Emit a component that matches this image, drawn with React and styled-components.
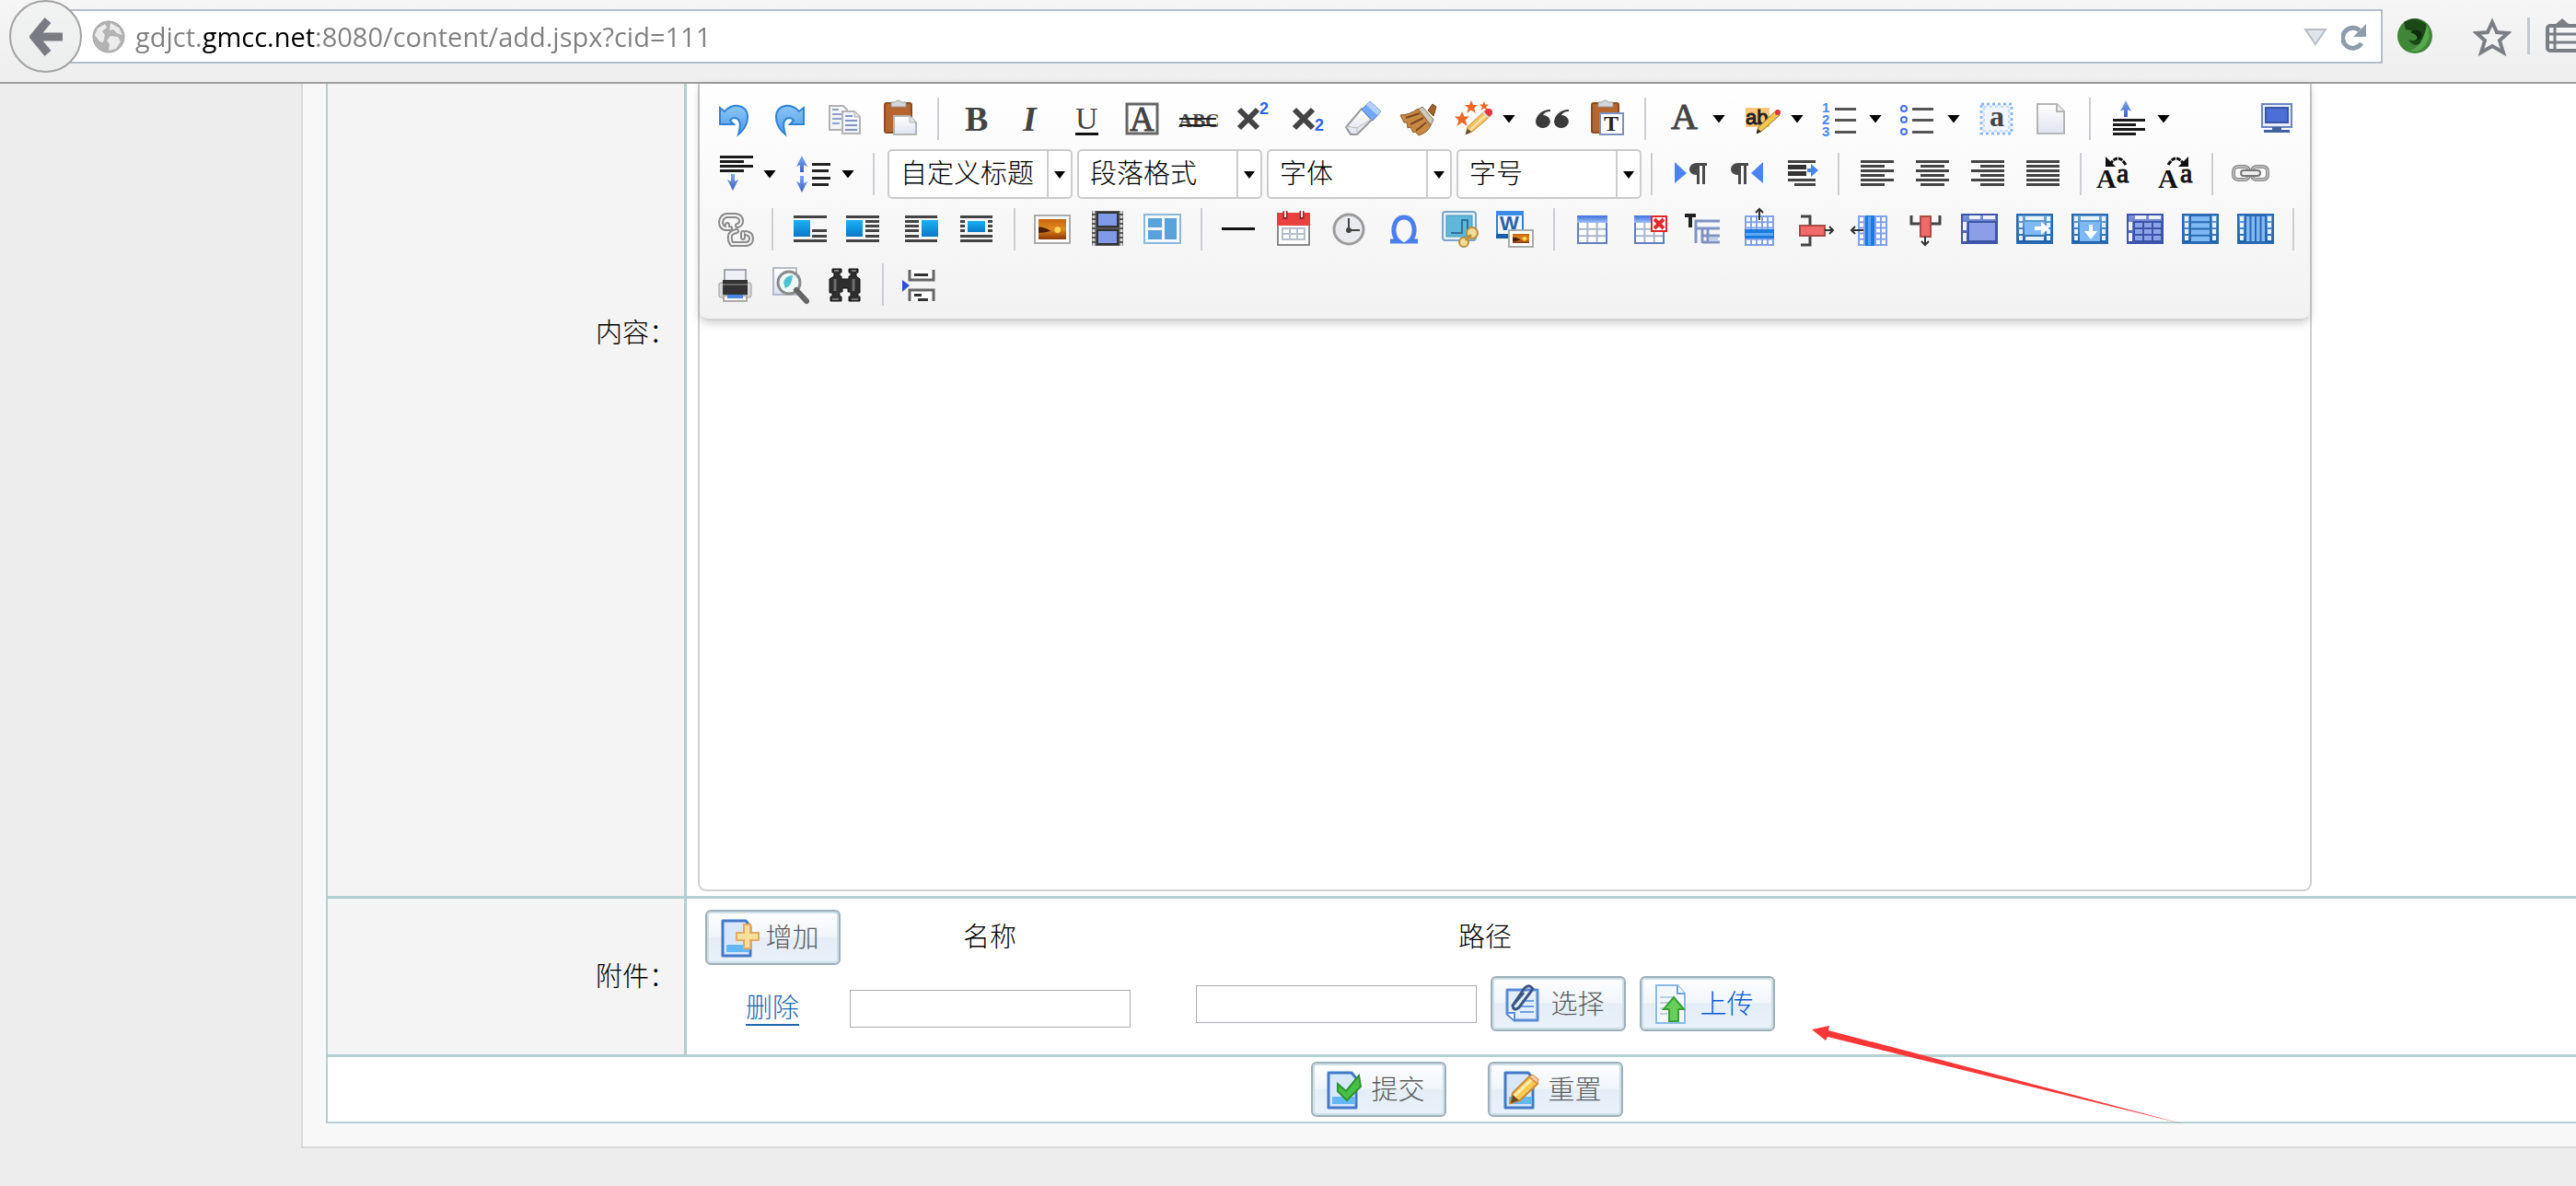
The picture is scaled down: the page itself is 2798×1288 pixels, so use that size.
import React from "react";
import styled, { createGlobalStyle } from "styled-components";

const cjk = `"Liberation Sans", "Noto Sans CJK SC", sans-serif`;
const teal = "#b3cfd0";

const GlobalStyle = createGlobalStyle`
  *, *::before, *::after { box-sizing: border-box; }
  body {
    margin: 0;
    overflow: hidden;
    background: #ededed;
    color: #000;
    font: 300 29px/36px ${cjk};
  }
  button, input, select, textarea { font: inherit; color: inherit; }
`;

/* ---------- browser bar ---------- */

const NavBar = styled.header`
  display: flex;
  align-items: flex-start;
  height: 91px;
  overflow: hidden;
  border-bottom: 2px solid #a09fa0;
  background: linear-gradient(#f6f6f6, #eeeeee);
`;

const BackButton = styled.button`
  flex: none;
  z-index: 1;
  display: grid;
  place-items: center;
  width: 79px;
  height: 79px;
  margin-left: 10px;
  padding: 0;
  border: 2px solid #a3a3a3;
  border-radius: 50%;
  background: linear-gradient(#f2f3f3, #eceeee);
`;

const AddressField = styled.div`
  flex: 1;
  min-width: 0;
  display: flex;
  align-items: center;
  height: 59px;
  margin: 10px 0 0 -14px;
  padding: 0 8px 0 23px;
  border: 2px solid #b3bec9;
  background: #fff;
`;

const AddressInput = styled.input`
  flex: 1;
  min-width: 0;
  height: 55px;
  margin-left: 11px;
  padding: 0;
  border: 0;
  outline: 0;
  font: 400 29px/55px "Open Sans", "Noto Sans", sans-serif;
  color: #808080;
  background: linear-gradient(90deg, #808080 73px, #000 73px 196px, #808080 196px);
  -webkit-background-clip: text;
  background-clip: text;
  -webkit-text-fill-color: transparent;
`;

const BarButton = styled.button`
  flex: none;
  display: grid;
  place-items: center;
  width: 42px;
  height: 40px;
  padding: 0;
  border: 0;
  background: none;
`;

const BarTools = styled.div`
  flex: none;
  display: flex;
  align-items: center;
  gap: 17px;
  width: 210px;
  padding: 19px 0 0 14px;

  > :first-child { margin-right: 25px; }
`;

const BarDivider = styled.span`
  flex: none;
  width: 3px;
  height: 40px;
  background: #c3c9d0;
`;

/* ---------- form frame ---------- */

const Panel = styled.main`
  margin: 0 -34px 0 327px;
  padding: 0 0 25px 25px;
  border: solid #d9d9d9;
  border-width: 0 0 2px 2px;
  background: #f8f8f8;
`;

const Form = styled.form`
  border: solid ${teal};
  border-width: 0 0 2px 2px;
  background: #fff;
`;

const FormRow = styled.div`
  display: grid;
  grid-template-columns: 390px 1fr;
  border-bottom: 3px solid ${teal};
`;

const LabelCell = styled.div`
  display: flex;
  justify-content: flex-end;
  align-items: ${(p) => (p.$top ? "flex-start" : "center")};
  padding: ${(p) => (p.$top ? "253px 9px 0 0" : "0 9px 0 0")};
  border-right: 3px solid ${teal};
  background: #f4f4f4;
`;

const FieldCell = styled.div`
  padding: ${(p) => p.$pad};
`;

const SubmitRow = styled.div`
  display: flex;
  justify-content: center;
  gap: 45px;
  padding: 5px 7px 5px 5px;
`;

/* ---------- editor ---------- */

const Editor = styled.section`
  display: flex;
  flex-direction: column;
  max-width: 1753px;
  border: solid #d0d0d0;
  border-width: 0 2px 2px;
  border-radius: 0 0 9px 9px;
`;

const Toolbar = styled.div`
  padding: 8px 6px 7px 8px;
  border-bottom: 2px solid #d2d2d2;
  border-radius: 0 0 9px 9px;
  background: linear-gradient(#ffffff, #f2f2f2);
  box-shadow: 0 3px 10px rgba(0, 0, 0, 0.2);
`;

const ToolRow = styled.div`
  display: flex;
  align-items: center;
  height: 60px;
`;

const ToolButton = styled.button`
  flex: none;
  display: flex;
  align-items: center;
  width: ${(p) => (p.$menu ? 85 : 60)}px;
  height: 60px;
  margin-left: ${(p) => (p.$end ? "auto" : "0")};
  padding: 0 0 0 10px;
  border: 0;
  background: none;
`;

const Glyph = styled.svg`
  flex: none;
  display: block;
  width: 40px;
  height: 40px;
  overflow: visible;
`;

const Caret = styled.span`
  width: 14px;
  height: 9px;
  margin-left: 11px;
  background: #000;
  clip-path: polygon(0 0, 100% 0, 50% 100%);
`;

const Separator = styled.span`
  flex: none;
  width: 2px;
  height: 46px;
  margin: 0 11px 0 10px;
  background: #cfcdd3;
`;

const Combos = styled.div`
  display: flex;
  gap: 5px;
  padding-left: 3px;
`;

const Combo = styled.label`
  display: flex;
  align-items: center;
  width: 201px;
  height: 54px;
  border: 2px solid #cccccc;
  border-radius: 5px;
  background: #fff;
`;

const ComboSelect = styled.select`
  flex: 1;
  min-width: 0;
  height: 50px;
  padding: 0 0 0 12px;
  border: 0;
  outline: 0;
  appearance: none;
  background: none;
`;

const ComboArrow = styled.span`
  flex: none;
  display: grid;
  place-items: center;
  width: 26px;
  height: 50px;
  border-left: 2px solid #cccccc;
  ${Caret} { margin: 2px 0 0; width: 12px; height: 8px; }
`;

const EditArea = styled.textarea`
  display: block;
  width: 100%;
  height: 618px;
  padding: 16px;
  border: 0;
  outline: 0;
  resize: none;
  background: transparent;
`;

/* ---------- attachments ---------- */

const Attachments = styled.table`
  border-collapse: collapse;
  table-layout: fixed;
  width: 1240px;
  td, th { height: 72px; padding: 0; font-weight: 300; text-align: center; }
`;

const LowCell = styled.td`
  && { padding-top: 10px; }
`;

const PathGroup = styled.div`
  display: flex;
  justify-content: center;
  align-items: center;
  gap: 15px;
`;

const TextInput = styled.input`
  width: 305px;
  height: 41px;
  padding: 0 8px;
  border: 1px solid #abadb3;
  outline: 0;
  background: #fff;
  vertical-align: middle;
`;

const DeleteLink = styled.a`
  display: inline-block;
  line-height: 34px;
  color: #1f66ad;
  text-decoration: none;
  border-bottom: 2px solid #1f66ad;
`;

const PushButton = styled.button`
  display: inline-flex;
  align-items: center;
  gap: 8px;
  height: 60px;
  width: 147px;
  padding: 2px 0 0 12px;
  border: 2px solid #9fb0ba;
  border-radius: 6px;
  background: linear-gradient(#fdfeff, #f1f6fb 48%, #e5eef6 50%, #e9f1fb);
  box-shadow: inset 0 0 0 2px #cfdfe6;
  color: ${(p) => (p.$accent ? "#0a5ad8" : "#5c5c5c")};
  vertical-align: middle;
  white-space: nowrap;
`;

const ButtonIcon = styled.svg`
  flex: none;
  width: 44px;
  height: 44px;
  overflow: visible;
`;

const Pointer = styled.svg`
  position: absolute;
  left: 1968px;
  top: 1113px;
  width: 406px;
  height: 110px;
  pointer-events: none;
`;

/* ---------- icon drawings, each on a 40 x 40 field ---------- */

const serif = "Liberation Serif, serif";
const sans = "Liberation Sans, sans-serif";

const Bars = ({ rows, c = "#444", h = 3 }) =>
  rows.map(([x1, x2, y], i) => (
    <rect key={i} x={x1} y={y - 1} width={x2 - x1} height={h} fill={c} />
  ));

const Letter = ({ x, y, s, children, f = serif, ...rest }) => (
  <text x={x} y={y} fontSize={s} fontFamily={f} fontWeight="700" fill="#444" {...rest}>
    {children}
  </text>
);

const ArrowV = ({ x, y, up }) => (
  <path
    d={up
      ? `M${x} ${y}l6 12l-4-2v8h-4v-8l-4 2z`
      : `M${x} ${y + 18}l6-12l-4 2v-8h-4v8l-4-2z`}
    fill="url(#arrowBlue)"
  />
);

const Board = () => (
  <>
    <rect x="3" y="3" width="29" height="32" rx="2" fill="#b5662e" stroke="#8b4a1e" strokeWidth="2" />
    <path d="M10 2h4q3-4 7 0h5v5H10z" fill="#d5d8da" stroke="#999" />
  </>
);

const Pencil = () => (
  <>
    <path d="M11 37l2-8L32 11l6 6L18 34z" fill="#f7c35f" stroke="#b5823a" />
    <path d="M16 32L35 14" stroke="#fde6ab" strokeWidth="2" />
    <path d="M11 37l2-6l4 3z" fill="#5b4630" />
    <circle cx="36" cy="13" r="4" fill="#e8323e" />
    <path d="M30 13l6 6" stroke="#d9d9d9" strokeWidth="2" />
  </>
);

const Star = ({ x, y, r }) => (
  <path
    transform={`translate(${x} ${y}) scale(${r})`}
    d="M0-1L.3-.3L1-.3L.45.2L.7 1L0 .5L-.7 1L-.45.2L-1-.3L-.3-.3z"
    fill="#ee6526"
  />
);

const Pilcrow = ({ x }) => (
  <path transform={`translate(${x} 8)`} d="M19 0v3h-2v20h-3V3h-3v20H8V13C-3 13-2 0 8 0z" fill="#4a4a4a" />
);

const Grid = ({ x, y, w, h, cols, rows, c = "#7f96c9", fill = "#fff", sw = 2 }) => (
  <>
    <rect x={x} y={y} width={w} height={h} fill={fill} stroke={c} strokeWidth={sw} />
    <path
      d={[
        ...Array.from({ length: cols - 1 }, (_, i) => `M${x + (w * (i + 1)) / cols} ${y}v${h}`),
        ...Array.from({ length: rows - 1 }, (_, i) => `M${x} ${y + (h * (i + 1)) / rows}h${w}`),
      ].join("")}
      stroke={c}
      strokeWidth={sw}
    />
  </>
);

const SmallTable = ({ x }) => (
  <>
    <Grid x={x} y={12} w={31} h={23} cols={3} rows={3} c="#a9b6cd" />
    <rect x={x} y="6" width="31" height="29" fill="none" stroke="#5f7fc0" strokeWidth="2" />
    <rect x={x - 1} y="5" width="33" height="8" fill="url(#headBlue)" />
  </>
);

const Photo = ({ x, y, w, h }) => (
  <>
    <rect x={x} y={y} width={w} height={h} fill="#fff" stroke="#aaa" strokeWidth="2" />
    <rect x={x + 4} y={y + 4} width={w - 8} height={h - 8} fill="url(#sunset)" />
    <circle cx={x + w * 0.65} cy={y + h * 0.52} r={w * 0.09} fill="#ffd257" />
    <path d={`M${x + 4} ${y + h * 0.42}q${w * 0.2} 0 ${w * 0.35} ${h * 0.15}q-${w * 0.2} 2-${w * 0.35} 2z`} fill="#4d1f08" />
  </>
);

const BlueFrame = ({ deep, children }) => (
  <>
    <rect x="1" y="4" width="38" height="31" fill={deep ? "url(#cellIndigo)" : "url(#cellBlue)"} stroke={deep ? "#3d55a8" : "#2a69b0"} strokeWidth="2" />
    {children}
  </>
);

const SideHoles = () =>
  [3, 33].map((x) => [6, 13, 20, 27].map((y) => <rect key={x + "-" + y} x={x} y={y} width="4" height="5" fill="#e8f3ff" />));

const IndigoHoles = () => (
  <path d="M9 5h12v4H9zM24 5h13v4H24zM2 12h4v9H2zM2 24h4v9H2z" fill="#eef1ff" />
);

const icons = {
  undo: <path d="M4 8l5 4C16 3 34 3 34 18C34 27 28 34 24 37C26 30 28 20 20 19C17 19 16 20 15 22L19 26H4z" fill="url(#undoBlue)" stroke="#2f83d8" strokeWidth="2" />,
  redo: <path d="M35 8l-5 4C23 3 5 3 5 18C5 27 11 34 15 37C13 30 11 20 19 19C22 19 23 20 24 22L20 26H35z" fill="url(#undoBlue)" stroke="#2f83d8" strokeWidth="2" />,
  copy: (
    <>
      <path d="M3 6h15l4 4v22H3z" fill="#f4f5f9" stroke="#b3b3b3" strokeWidth="2" />
      <Bars rows={[[6, 13, 10], [6, 16, 15], [6, 16, 20], [6, 14, 25]]} c="#8fa0cb" h={2} />
      <path d="M17 12h13l6 6v18H17z" fill="#f4f5f9" stroke="#b3b3b3" strokeWidth="2" />
      <path d="M30 12v6h6" fill="#ddd" stroke="#b3b3b3" />
      <Bars rows={[[20, 28, 17], [20, 33, 22], [20, 33, 27], [20, 33, 32]]} c="#7f93c4" h={2} />
    </>
  ),
  paste: (
    <>
      <Board />
      <path d="M13 17h17l7 7v13H13z" fill="url(#paper)" stroke="#b5b5b5" strokeWidth="2" />
      <path d="M30 17v7h7" fill="#e4e4e4" stroke="#b5b5b5" />
    </>
  ),
  bold: <Letter x={7} y={33} s={38}>B</Letter>,
  italic: <Letter x={10} y={33} s={38} fontStyle="italic">I</Letter>,
  underline: (
    <>
      <Letter x={7} y={31} s={34} fontWeight="400">U</Letter>
      <Bars rows={[[7, 32, 36]]} c="#111" />
    </>
  ),
  border: (
    <>
      <rect x="3" y="4" width="33" height="32" fill="#fff" stroke="#666" strokeWidth="3" />
      <Letter x={6} y={33} s={37} fontWeight="400" stroke="#444">A</Letter>
    </>
  ),
  strike: (
    <>
      <Letter x={-1} y={29} s={21} fill="#444">ABC</Letter>
      <Bars rows={[[0, 40, 20], [0, 40, 27]]} c="#222" h={2} />
    </>
  ),
  sup: (
    <>
      <path d="M5 10L25 30M25 10L5 30" stroke="#444" strokeWidth="6" />
      <Letter x={27} y={15} s={18} f={sans} fill="#2f62e8">2</Letter>
    </>
  ),
  sub: (
    <>
      <path d="M5 10L25 30M25 10L5 30" stroke="#444" strokeWidth="6" />
      <Letter x={27} y={33} s={18} f={sans} fill="#2f62e8">2</Letter>
    </>
  ),
  eraser: (
    <>
      <path d="M18 9L29 21L13 37H6L1 29z" fill="url(#paper)" stroke="#999" strokeWidth="2" />
      <path d="M27 1L39 12L30 22L18 10z" fill="#72a8f5" stroke="#4b7fd0" />
      <path d="M27 1L39 12L35 16L23 5z" fill="#b4d1fb" />
      <path d="M13 37V30L1 28M13 30L29 20" fill="none" stroke="#bbb" />
    </>
  ),
  brush: (
    <>
      <path d="M35 4l4 3l-3 10l-6-6z" fill="#a5622c" stroke="#70421f" />
      <path d="M19 10l5-3l12 14l-3 6z" fill="#cfc9b8" stroke="#7b6e55" />
      <path d="M0 16q10 0 19-7l14 18q-3 8-13 11l-4-4l-2 1l-3-6l-3 1l-1-6l-3 0z" fill="#c78a45" stroke="#8b5827" />
      <path d="M6 19l15-5M11 26l14-7M17 33l11-9" stroke="#7d4a1c" strokeWidth="2" />
    </>
  ),
  wand: (
    <>
      <Star x={17} y={7} r={7} />
      <Star x={31} y={6} r={5} />
      <Star x={7} y={20} r={8} />
      <Pencil />
    </>
  ),
  quote: (
    <>
      {[0, 20].map((x) => (
        <path key={x} transform={`translate(${x} 0)`} d="M18 10C8 10 2 17 2 24A8 7 0 1 0 10 16Q12 12 18 12z" fill="#3a3a3a" />
      ))}
    </>
  ),
  pasteText: (
    <>
      <Board />
      <rect x="12" y="14" width="25" height="23" fill="#fff" stroke="#7d90bd" strokeWidth="2" />
      <Letter x={16} y={33} s={24} fill="#222">T</Letter>
    </>
  ),
  color: <Letter x={6} y={31} s={40} fontWeight="400" stroke="#444">A</Letter>,
  highlight: (
    <>
      <rect x="2" y="8" width="26" height="21" fill="#fdc676" />
      <Letter x={2} y={26} s={22} f={sans} fill="#222" fontWeight="400" stroke="#222">ab</Letter>
      <path d="M14 36l2-7L34 12l5 4L20 33z" fill="#f3c74f" stroke="#8f6f2d" />
      <path d="M14 36l1-5l4 3z" fill="#222" />
      <circle cx="37" cy="13" r="3" fill="#e8323e" />
    </>
  ),
  ordered: (
    <>
      {[1, 2, 3].map((n) => (
        <Letter key={n} x={0} y={n * 13} s={15} f={sans} fill="#4d85f2">{n}</Letter>
      ))}
      <Bars rows={[[14, 37, 9], [14, 37, 21], [14, 37, 34]]} c="#555" />
    </>
  ),
  bullets: (
    <>
      {[9, 21, 34].map((y) => (
        <circle key={y} cx="4" cy={y} r="3" fill="#fff" stroke="#4470f0" strokeWidth="2" />
      ))}
      <Bars rows={[[13, 36, 9], [13, 36, 21], [13, 36, 34]]} c="#555" />
    </>
  ),
  selectAll: (
    <>
      <rect x="3" y="4" width="33" height="32" fill="#f0f6ff" stroke="#8fb8f5" strokeWidth="3" strokeDasharray="3 3" />
      <rect x="6" y="7" width="27" height="26" fill="none" stroke="#c3dafb" strokeWidth="2" strokeDasharray="3 3" />
      <Letter x={12} y={28} s={32}>a</Letter>
    </>
  ),
  page: (
    <>
      <path d="M4 4h21l8 8v24H4z" fill="url(#paper)" stroke="#b5b5b5" strokeWidth="2" />
      <path d="M25 4v8h8" fill="#eee" stroke="#b5b5b5" strokeWidth="2" />
    </>
  ),
  spaceAbove: (
    <>
      <ArrowV x={17} y={0} up />
      <Bars rows={[[3, 38, 21], [3, 28, 26], [3, 38, 31], [3, 28, 36]]} c="#1a1a1a" />
    </>
  ),
  fullscreen: (
    <>
      <rect x="4" y="4" width="32" height="25" fill="#e9eefa" stroke="#6b86bf" strokeWidth="2" />
      <rect x="8" y="8" width="24" height="16" fill="#4a70d8" stroke="#3a55a5" strokeWidth="2" />
      <path d="M15 29h10v3h9v3H6v-3h9z" fill="#41619f" />
    </>
  ),
  spaceBelow: (
    <>
      <Bars rows={[[4, 40, 1], [4, 30, 6], [4, 40, 11], [4, 30, 16]]} c="#1a1a1a" />
      <ArrowV x={18} y={20} />
    </>
  ),
  lineHeight: (
    <>
      <ArrowV x={8} y={0} up />
      <ArrowV x={8} y={22} />
      <Bars rows={[[19, 39, 9], [19, 37, 16], [19, 39, 24], [19, 37, 31]]} c="#222" />
    </>
  ),
  ltr: (
    <>
      <path d="M3 7v23l13-11z" fill="#4c83f3" />
      <Pilcrow x={19} />
    </>
  ),
  rtl: (
    <>
      <Pilcrow x={4} />
      <path d="M39 7v23L26 19z" fill="#4c83f3" />
    </>
  ),
  indent: (
    <>
      <Bars rows={[[6, 36, 6], [13, 36, 31], [6, 36, 26]]} />
      <Bars rows={[[6, 26, 11], [6, 26, 18]]} c="#333" h={5} />
      <path d="M27 14h4V9l8 7l-8 7v-5h-4z" fill="#4c83f3" />
    </>
  ),
  alignLeft: <Bars rows={[[2, 38, 6], [2, 28, 11], [2, 38, 16], [2, 28, 21], [2, 38, 26], [2, 28, 31]]} />,
  alignCenter: <Bars rows={[[2, 38, 6], [7, 33, 11], [2, 38, 16], [7, 33, 21], [2, 38, 26], [7, 33, 31]]} />,
  alignRight: <Bars rows={[[2, 38, 6], [12, 38, 11], [2, 38, 16], [12, 38, 21], [2, 38, 26], [12, 38, 31]]} />,
  alignJustify: <Bars rows={[[2, 38, 6], [2, 38, 11], [2, 38, 16], [2, 38, 21], [2, 38, 26], [2, 38, 31]]} />,
  upper: (
    <>
      <Letter x={-5} y={35} s={30} fill="#111">A</Letter>
      <Letter x={17} y={29} s={30} fill="#111" fontWeight="400" stroke="#111">a</Letter>
      <path d="M27 10q-8-13-16-2" fill="none" stroke="#111" strokeWidth="3" strokeDasharray="5 1" />
      <path d="M5 1v11h11z" fill="#111" />
    </>
  ),
  lower: (
    <>
      <Letter x={2} y={35} s={30} fill="#111">A</Letter>
      <Letter x={26} y={29} s={30} fill="#111" fontWeight="400" stroke="#111">a</Letter>
      <path d="M13 10q8-13 16-2" fill="none" stroke="#111" strokeWidth="3" strokeDasharray="5 1" />
      <path d="M35 1v11H24z" fill="#111" />
    </>
  ),
  link: (
    <>
      <rect x="1" y="12" width="17" height="14" rx="5" fill="none" stroke="#8a8a8a" strokeWidth="4" />
      <rect x="21" y="12" width="17" height="14" rx="5" fill="none" stroke="#8a8a8a" strokeWidth="4" />
      <rect x="1" y="12" width="17" height="14" rx="5" fill="none" stroke="#e4e4e4" />
      <rect x="21" y="12" width="17" height="14" rx="5" fill="none" stroke="#e4e4e4" />
      <rect x="9" y="16" width="21" height="6" rx="3" fill="#eee" stroke="#777" strokeWidth="2" />
    </>
  ),
  unlink: (
    <>
      {["#8b8b8b", "#f4f4f4"].map((c, i) => (
        <path
          key={c}
          d="M15 19H10q-5-1-5-7q1-6 6-7h10q6 1 6 6q0 4-4 5M22 22q-6 1-7 5q-1 5 2 9h16q5-1 5-6q0-5-6-6M12 19v-4M29 24v5"
          fill="none"
          stroke={c}
          strokeWidth={i ? 2 : 6}
          strokeLinecap="round"
        />
      ))}
    </>
  ),
  imgNone: (
    <>
      <Bars rows={[[1, 37, 6], [21, 37, 21], [21, 37, 27], [1, 37, 32]]} />
      <rect x="1" y="10" width="18" height="18" fill="url(#azure)" />
    </>
  ),
  imgLeft: (
    <>
      <Bars rows={[[-2, 34, 6], [19, 34, 11], [19, 34, 16], [19, 34, 21], [19, 34, 27], [-2, 34, 32]]} />
      <rect x="-2" y="10" width="18" height="18" fill="url(#azure)" />
    </>
  ),
  imgRight: (
    <>
      <Bars rows={[[2, 37, 6], [2, 17, 11], [2, 17, 16], [2, 17, 21], [2, 17, 27], [2, 37, 32]]} />
      <rect x="20" y="10" width="18" height="18" fill="url(#azure)" />
    </>
  ),
  imgCenter: (
    <>
      <Bars rows={[[2, 37, 6], [2, 7, 11], [32, 37, 11], [2, 7, 16], [32, 37, 16], [2, 7, 21], [32, 37, 21], [2, 37, 27], [2, 37, 32]]} />
      <rect x="10" y="11" width="19" height="12" fill="url(#azure)" />
    </>
  ),
  image: <Photo x={0} y={5} w={38} h={30} />,
  film: (
    <>
      <rect x="2" y="0" width="34" height="38" fill="#555" />
      <path d="M4 0v38M34 0v38" stroke="#d8d8d8" strokeWidth="3" strokeDasharray="3 2" />
      <rect x="8" y="2" width="22" height="15" fill="#7f9be8" stroke="#333" strokeWidth="2" />
      <rect x="8" y="21" width="22" height="15" fill="#7f9be8" stroke="#333" strokeWidth="2" />
    </>
  ),
  template: (
    <>
      <rect x="-1" y="4" width="39" height="31" fill="#f3f9ff" stroke="#8bb8da" strokeWidth="2" />
      <path d="M3 8h15v10H3zM3 21h15v10H3zM21 8h13v23H21z" fill="#5aa2da" />
    </>
  ),
  rule: <Bars rows={[[0, 36, 19]]} c="#111" />,
  date: (
    <>
      <rect x="1" y="3" width="34" height="34" fill="#fff" stroke="#8a8a8a" strokeWidth="2" />
      <rect x="0" y="2" width="36" height="14" fill="#e8413e" />
      <path d="M9 0v9M27 0v9" stroke="#9b2222" strokeWidth="5" />
      <path d="M9 0v7M27 0v7" stroke="#eee" strokeWidth="2" />
      <Grid x={6} y={19} w={24} h={12} cols={3} rows={2} c="#b5bfcc" />
    </>
  ),
  clock: (
    <>
      <circle cx="18" cy="20" r="16" fill="#e9eaee" stroke="#9c9c9c" strokeWidth="3" />
      <path d="M18 8v13h12" fill="none" stroke="#444" strokeWidth="2" />
      <circle cx="18" cy="21" r="3" fill="#444" />
    </>
  ),
  omega: <path d="M3 33h9C4 27 5 7 18 7s14 20 6 26h9" fill="none" stroke="#4a7fee" strokeWidth="5" />,
  map: (
    <>
      <rect x="0" y="1" width="36" height="31" rx="3" fill="#e7f3fa" stroke="#7ba4c8" strokeWidth="2" />
      <rect x="4" y="5" width="28" height="23" fill="#5fb8d9" stroke="#4a94bb" />
      <path d="M9 24h12V10h6v16" fill="none" stroke="#2f7398" strokeWidth="2" />
      <circle cx="32" cy="24" r="6" fill="#f6dc94" stroke="#b78e3b" strokeWidth="2" />
      <circle cx="23" cy="34" r="5" fill="#f6dc94" stroke="#b78e3b" strokeWidth="2" />
      <path d="M25 32l6-6" stroke="#b78e3b" strokeWidth="3" />
    </>
  ),
  word: (
    <>
      <rect x="-1" y="1" width="28" height="28" fill="#f3f8ff" stroke="#2f7fd6" strokeWidth="2" />
      <rect x="-2" y="0" width="30" height="5" fill="#3d8be8" />
      <rect x="-2" y="25" width="14" height="5" fill="#1b5cab" />
      <Letter x={2} y={21} s={22} f={sans} fill="#2a62a8">W</Letter>
      <Photo x={12} y={21} w={26} h={18} />
    </>
  ),
  table: <SmallTable x={4} />,
  tableDelete: (
    <>
      <SmallTable x={6} />
      <rect x="24" y="6" width="16" height="16" fill="#fff" stroke="#e0282c" strokeWidth="2" />
      <path d="M27 9l10 10M37 9L27 19" stroke="#e0282c" strokeWidth="4" />
    </>
  ),
  tableTitle: (
    <>
      <path d="M0 3h12v4H8v11H4V7H0z" fill="#222" />
      <path d="M12 35V11h26M19 35V19h19M12 19h26M25 19v16M19 27h19M19 34h19" fill="none" stroke="#7f93c4" strokeWidth="3" />
      <path d="M27 29h9v4h-9z" fill="#c4cfee" />
    </>
  ),
  rowInsert: (
    <>
      <Grid x={6} y={6} w={30} h={31} cols={5} rows={5} c="#7fa2ea" />
      <rect x="5" y="20" width="32" height="10" fill="#1b7be0" />
      <rect x="6" y="24" width="30" height="3" fill="#5ea8f2" />
      <path d="M21 10V-1M17 2l4-4l4 4" fill="none" stroke="#333" strokeWidth="2" />
    </>
  ),
  rowDelete: (
    <>
      <path d="M6 6h10v9M6 37h10v-9" fill="none" stroke="#444" strokeWidth="3" />
      <rect x="5" y="16" width="27" height="11" fill="#f06a6a" stroke="#a84a45" strokeWidth="2" />
      <path d="M32 21h9M37 17l4 4l-4 4" fill="none" stroke="#333" strokeWidth="2" />
    </>
  ),
  colInsert: (
    <>
      <Grid x={9} y={6} w={30} h={31} cols={5} rows={5} c="#7fa2ea" />
      <rect x="16" y="5" width="10" height="33" fill="#1b7be0" />
      <rect x="19" y="6" width="3" height="31" fill="#5e9ff2" />
      <path d="M14 21H2M5 17l-4 4l4 4" fill="none" stroke="#333" strokeWidth="2" />
    </>
  ),
  colDelete: (
    <>
      <path d="M6 5v9h9M37 5v9h-9" fill="none" stroke="#444" strokeWidth="3" />
      <rect x="16" y="6" width="11" height="22" fill="#f06a6a" stroke="#a84a45" strokeWidth="2" />
      <path d="M21 28v9M17 33l4 4l4-4" fill="none" stroke="#333" strokeWidth="2" />
    </>
  ),
  mergeCells: (
    <BlueFrame deep>
      <IndigoHoles />
      <rect x="8" y="12" width="30" height="21" fill="#8c9fe6" stroke="#3d55a8" strokeWidth="2" />
    </BlueFrame>
  ),
  mergeRight: (
    <BlueFrame>
      <SideHoles />
      <rect x="10" y="6" width="20" height="4" fill="#e8f3ff" />
      <rect x="10" y="28" width="20" height="4" fill="#e8f3ff" />
      <rect x="9" y="12" width="22" height="14" fill="#7fb9f5" />
      <path d="M20 17h7v-5l9 7l-9 7v-5h-7z" fill="#fff" />
    </BlueFrame>
  ),
  mergeDown: (
    <BlueFrame>
      <SideHoles />
      <rect x="10" y="6" width="20" height="4" fill="#e8f3ff" />
      <rect x="9" y="12" width="22" height="21" fill="#7fb9f5" />
      <path d="M19 15v7h-5l7 9l7-9h-5v-7z" fill="#fff" />
    </BlueFrame>
  ),
  splitCells: (
    <BlueFrame deep>
      <IndigoHoles />
      <Grid x={8} y={12} w={30} h={21} cols={3} rows={3} c="#3d55a8" fill="#8ba3e8" />
    </BlueFrame>
  ),
  splitRows: (
    <BlueFrame>
      <SideHoles />
      <Grid x={9} y={5} w={22} h={29} cols={1} rows={4} c="#2a69b0" fill="#7fb9f5" />
    </BlueFrame>
  ),
  splitCols: (
    <BlueFrame>
      <SideHoles />
      <Grid x={9} y={5} w={22} h={29} cols={4} rows={1} c="#2a69b0" fill="#7fb9f5" />
    </BlueFrame>
  ),
  print: (
    <>
      <path d="M9 4h23v14H9z" fill="#eef1f5" stroke="#a5a9ad" strokeWidth="2" />
      <rect x="3" y="18" width="35" height="16" rx="2" fill="#d8d8d8" stroke="#999" />
      <path d="M7 15h27v18H7z" fill="#333" />
      <path d="M7 20h27" stroke="#666" strokeWidth="2" />
      <path d="M8 32h25v6H8z" fill="#f6f6f6" stroke="#aaa" strokeWidth="2" />
      <rect x="12" y="31" width="17" height="4" fill="#4b86e8" />
    </>
  ),
  preview: (
    <>
      <path d="M2 2h25v29H2z" fill="url(#paper)" stroke="#b4bac8" strokeWidth="2" />
      <path d="M7 16q1-8 7-10v20q-6-3-7-10z" fill="#3b6ea5" />
      <circle cx="19" cy="18" r="12" fill="#edf7fa" stroke="#8b8b8b" strokeWidth="3" />
      <path d="M13 18q2-8 10-8q-1 12-8 14z" fill="#4cc3d0" />
      <path d="M27 26l11 12" stroke="#666" strokeWidth="6" strokeLinecap="round" />
    </>
  ),
  find: (
    <>
      <path d="M6 3h10v4h-2v4h2v3h8v-3h2V7h-2V3h10v4h-2v4l4 3v15h-2v4h2v5H24v-5h2v-5h-3v-4h-6v4h-3v5h2v5H4v-5h2v-4H3V14l5-3V7H6z" fill="#2e2e2e" stroke="#111" />
      <path d="M9 14v13M29 14v13" stroke="#6d6d6d" strokeWidth="3" />
      <path d="M8 5h5M27 5h5M6 36h7M27 36h7" stroke="#777" strokeWidth="2" />
    </>
  ),
  pageBreak: (
    <>
      <path d="M-1 15l8 6l-8 7z" fill="#2950d0" />
      <path d="M7 4v11h26V4M7 38V26h26v12" fill="#fff" stroke="#666" strokeWidth="3" />
      <Bars rows={[[12, 27, 9], [12, 20, 31], [16, 27, 36]]} c="#333" />
    </>
  ),
};

const toolRows = [
  [
    ["undo", "撤销"], ["redo", "重做"], ["copy", "复制"], ["paste", "粘贴"], "|",
    ["bold", "加粗"], ["italic", "斜体"], ["underline", "下划线"], ["border", "字符边框"],
    ["strike", "删除线"], ["sup", "上标"], ["sub", "下标"], ["eraser", "清除格式"],
    ["brush", "格式刷"], ["wand", "自动排版", true], ["quote", "引用"], ["pasteText", "纯文本粘贴"], "|",
    ["color", "字体颜色", true], ["highlight", "背景色", true], ["ordered", "有序列表", true],
    ["bullets", "无序列表", true], ["selectAll", "全选"], ["page", "清空文档"], "|",
    ["spaceAbove", "段前距", true], ["fullscreen", "全屏", false, true],
  ],
  [
    ["spaceBelow", "段后距", true], ["lineHeight", "行间距", true], "|", "combos", "|",
    ["ltr", "从左向右输入"], ["rtl", "从右向左输入"], ["indent", "首行缩进"], "|",
    ["alignLeft", "居左对齐"], ["alignCenter", "居中对齐"], ["alignRight", "居右对齐"],
    ["alignJustify", "两端对齐"], "|", ["upper", "字母大写"], ["lower", "字母小写"], "|", ["link", "超链接"],
  ],
  [
    ["unlink", "取消链接"], "|", ["imgNone", "默认"], ["imgLeft", "左浮动"], ["imgRight", "右浮动"],
    ["imgCenter", "居中"], "|", ["image", "图片"], ["film", "视频"], ["template", "模板"], "|",
    ["rule", "分隔线"], ["date", "日期"], ["clock", "时间"], ["omega", "特殊字符"], ["map", "截图"],
    ["word", "图片转存"], "|", ["table", "插入表格"], ["tableDelete", "删除表格"],
    ["tableTitle", "表格前插入行"], ["rowInsert", "前插入行"], ["rowDelete", "删除行"],
    ["colInsert", "前插入列"], ["colDelete", "删除列"], ["mergeCells", "合并多个单元格"],
    ["mergeRight", "右合并单元格"], ["mergeDown", "下合并单元格"], ["splitCells", "完全拆分单元格"],
    ["splitRows", "拆分成行"], ["splitCols", "拆分成列"], "|",
  ],
  [["print", "打印"], ["preview", "预览"], ["find", "查询替换"], "|", ["pageBreak", "分页"]],
];

const comboLabels = ["自定义标题", "段落格式", "字体", "字号"];

const ComboGroup = () => (
  <Combos>
    {comboLabels.map((text) => (
      <Combo key={text}>
        <ComboSelect aria-label={text}>
          <option>{text}</option>
        </ComboSelect>
        <ComboArrow><Caret /></ComboArrow>
      </Combo>
    ))}
  </Combos>
);

const Tool = ({ name, title, menu, end }) => (
  <ToolButton type="button" aria-label={title} $menu={menu} $end={end}>
    <Glyph viewBox="0 0 40 40">{icons[name]}</Glyph>
    {menu && <Caret />}
  </ToolButton>
);

const Gradient = ({ id, stops }) => (
  <linearGradient id={id} x1="0" y1="0" x2="0" y2="1">
    {stops.map((c, i) => (
      <stop key={c} offset={i / (stops.length - 1)} stopColor={c} />
    ))}
  </linearGradient>
);

/* ---------- push-button drawings ---------- */

const Sheet = () => (
  <>
    <path d="M5 3h25l5 6v32H5z" fill="#d8e8fc" stroke="#4579c8" strokeWidth="3" strokeLinejoin="round" />
    <rect x="9" y="29" width="24" height="8" fill="#62b8f8" />
  </>
);

const buttonIcons = {
  add: (
    <>
      <Sheet />
      <path d="M28 7h7v9h9v8h-9v9h-7v-9h-8v-8h8z" fill="#fbe09b" stroke="#e2aa62" strokeWidth="2" />
    </>
  ),
  choose: (
    <>
      <path d="M4 6h33v33H12l-8-7z" fill="#e3eefc" stroke="#5b8bd6" strokeWidth="3" strokeLinejoin="round" />
      <path d="M4 31h8v8" fill="#fff" stroke="#5b8bd6" strokeWidth="2" />
      <Bars rows={[[20, 33, 18], [18, 33, 24], [18, 33, 30]]} c="#6f9fe2" h={2} />
      <path d="M10 23L23 4q5-5 9 1L17 25q-6 5-7-2L22 9" fill="none" stroke="#3c5584" strokeWidth="3" />
    </>
  ),
  upload: (
    <>
      <path d="M4 1h23l8 9v32H4z" fill="#f3f8fe" stroke="#8dbbe8" strokeWidth="2" />
      <path d="M27 1v9h8" fill="#fff" stroke="#6da4dd" strokeWidth="2" />
      <Bars rows={[[8, 22, 14], [8, 20, 20], [8, 16, 26], [8, 16, 32]]} c="#b7cfe6" h={2} />
      <path d="M23 14l11 13h-6v13H18V27h-6z" fill="#66cf5a" stroke="#38a038" strokeWidth="2" />
    </>
  ),
  submit: (
    <>
      <Sheet />
      <path d="M15 15l9 8L38 6l2 12L25 33L15 23z" fill="#49c043" stroke="#2b9433" strokeWidth="2" />
    </>
  ),
  reset: (
    <>
      <Sheet />
      <path d="M11 36l2-11L31 7l9 8L21 33z" fill="#f8cb52" stroke="#cb8a37" strokeWidth="2" />
      <path d="M15 28L33 11" stroke="#fdeeb0" strokeWidth="3" />
      <path d="M11 36l2-9l7 6z" fill="#6b4a26" />
      <path d="M31 7l4-2l6 5l-1 5z" fill="#f7c9a4" stroke="#cb8a37" />
    </>
  ),
};

const Push = ({ icon, children, ...rest }) => (
  <PushButton type="button" {...rest}>
    <ButtonIcon viewBox="0 0 44 44">{buttonIcons[icon]}</ButtonIcon>
    {children}
  </PushButton>
);

export default function App() {
  return (
    <>
      <GlobalStyle />
      <NavBar>
        <BackButton aria-label="后退">
          <svg width="36" height="42" viewBox="0 0 36 42">
            <path d="M20 3L5 21L20 39M6 21H36" fill="none" stroke="#797d83" strokeWidth="9" />
          </svg>
        </BackButton>
        <AddressField>
          <svg width="36" height="36" viewBox="0 0 36 36">
            <circle cx="18" cy="18" r="17" fill="#b3b3b3" stroke="#a5a5a5" />
            <path d="M6 9l8-5l2 4l-5 4l3 4l-2 8l-4-1l-5-7zM20 3l9 5l4 8l-6-2l-4-4l-4 1zM20 17l8 1l3 5l-5 8l-8 2l1-7l-3-4z" fill="#ececec" />
          </svg>
          <AddressInput aria-label="地址" defaultValue="gdjct.gmcc.net:8080/content/add.jspx?cid=111" />
          <BarButton aria-label="历史记录">
            <svg width="26" height="20" viewBox="0 0 26 20">
              <path d="M2 2h22L13 18z" fill="#dfe4ea" stroke="#b9bdc4" strokeWidth="2" />
            </svg>
          </BarButton>
          <BarButton aria-label="刷新">
            <svg width="28" height="32" viewBox="0 0 28 32">
              <path d="M22 23A11 11 0 1 1 20 9" fill="none" stroke="#8e9cab" strokeWidth="5" />
              <path d="M27 2v14H13z" fill="#8e9cab" />
            </svg>
          </BarButton>
        </AddressField>
        <BarTools>
          <BarButton aria-label="扩展">
            <svg width="40" height="40" viewBox="0 0 40 40">
              <circle cx="20" cy="20" r="19" fill="#3f8636" />
              <path d="M8 5Q20-3 32 7Q37 20 28 28Q18 33 13 24Q22 27 25 20Q20 14 10 13z" fill="#1c4717" />
              <path d="M15 16q6-5 12 0q2 8-6 9q5-5-6-9z" fill="#0f2a0d" />
              <path d="M33 8q6 12-2 23q-8 8-17 5q14-3 19-28z" fill="#56a94c" />
            </svg>
          </BarButton>
          <BarButton aria-label="书签">
            <svg width="42" height="42" viewBox="0 0 42 42">
              <path d="M21 5l5 11l12 1l-9 8l4 13l-12-7l-12 7l4-13l-9-8l12-1z" fill="none" stroke="#7b7f85" strokeWidth="4" />
            </svg>
          </BarButton>
          <BarDivider />
          <BarButton aria-label="书签列表">
            <svg width="42" height="40" viewBox="0 0 42 40">
              <path d="M10 8l8-7l8 7z" fill="#7b7f85" />
              <rect x="2" y="9" width="36" height="27" rx="3" fill="#f6f6f6" stroke="#7b7f85" strokeWidth="4" />
              <path d="M10 9v27M4 18h34M4 27h34" stroke="#7b7f85" strokeWidth="3" />
            </svg>
          </BarButton>
        </BarTools>
      </NavBar>

      <Panel>
        <Form onSubmit={(e) => e.preventDefault()}>
          <FormRow>
            <LabelCell $top>
              <label htmlFor="content">内容：</label>
            </LabelCell>
            <FieldCell $pad="0 12px 5px">
              <Editor>
                <Toolbar>
                  {toolRows.map((row, r) => (
                    <ToolRow key={r}>
                      {row.map((t, i) => {
                        if (t === "|") return <Separator key={i} />;
                        if (t === "combos") return <ComboGroup key={i} />;
                        return <Tool key={t[0]} name={t[0]} title={t[1]} menu={t[2]} end={t[3]} />;
                      })}
                    </ToolRow>
                  ))}
                </Toolbar>
                <EditArea id="content" />
              </Editor>
            </FieldCell>
          </FormRow>

          <FormRow>
            <LabelCell>附件：</LabelCell>
            <FieldCell $pad="6px 11px 19px">
              <Attachments>
                <colgroup>
                  <col width="164" />
                  <col width="308" />
                  <col width="768" />
                </colgroup>
                <tbody>
                  <tr>
                    <td><Push icon="add">增加</Push></td>
                    <th scope="col" id="name">名称</th>
                    <th scope="col" id="path">路径</th>
                  </tr>
                  <tr>
                    <LowCell><DeleteLink href="#delete">删除</DeleteLink></LowCell>
                    <LowCell><TextInput aria-labelledby="name" /></LowCell>
                    <td>
                      <PathGroup>
                        <TextInput aria-labelledby="path" />
                        <Push icon="choose">选择</Push>
                        <Push icon="upload" $accent>上传</Push>
                      </PathGroup>
                    </td>
                  </tr>
                </tbody>
              </Attachments>
            </FieldCell>
          </FormRow>

          <SubmitRow>
            <Push icon="submit">提交</Push>
            <Push icon="reset">重置</Push>
          </SubmitRow>
        </Form>
      </Panel>

      <Pointer viewBox="0 0 406 110">
        <defs>
          <Gradient id="undoBlue" stops={["#8cc6f7", "#4c9be8"]} />
          <Gradient id="arrowBlue" stops={["#7fa6f5", "#3a62c8"]} />
          <Gradient id="paper" stops={["#ffffff", "#dfe3ef"]} />
          <Gradient id="azure" stops={["#1ab2f5", "#0a78c8"]} />
          <Gradient id="headBlue" stops={["#3f6fe0", "#9cc0f8"]} />
          <Gradient id="sunset" stops={["#c8640f", "#e08a1c", "#8e3606"]} />
          <Gradient id="cellBlue" stops={["#6fa9e3", "#1d5fa8"]} />
          <Gradient id="cellIndigo" stops={["#7f95de", "#3a4fa8"]} />
        </defs>
        <path d="M0 5L19 1L18 6L405 108L17 13L15 17z" fill="#fa3737" />
      </Pointer>
    </>
  );
}
